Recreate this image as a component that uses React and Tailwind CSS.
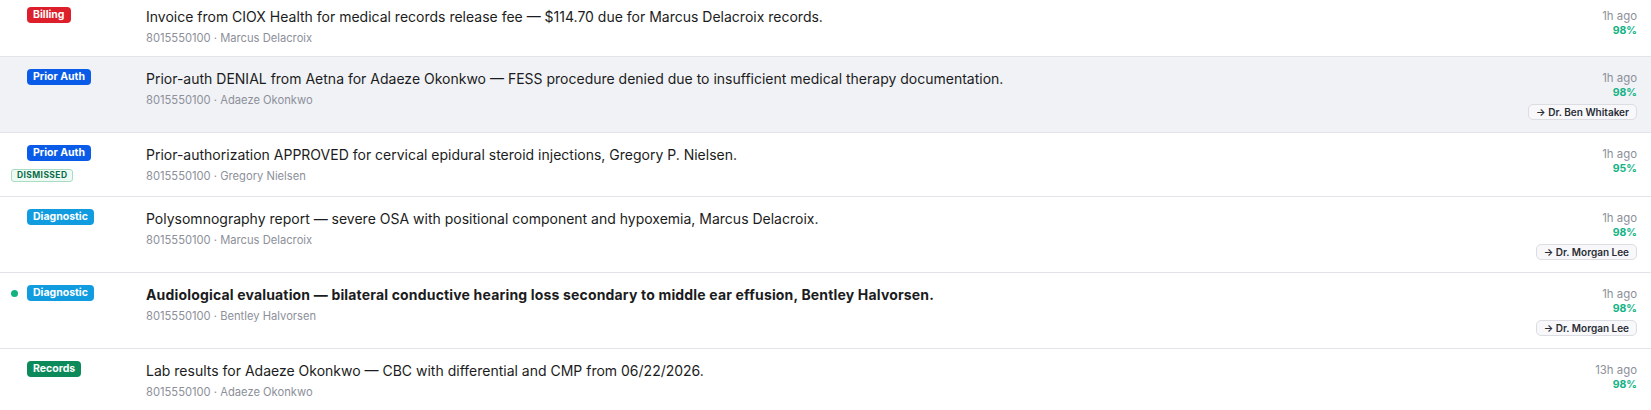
import React from "react";

const BADGE = {
  Billing: "bg-[#dc1f2a]",
  "Prior Auth": "bg-[#0a5ce8]",
  Diagnostic: "bg-[#119ce0]",
  Records: "bg-[#0d8a5a]",
};

const rows = [
  { tag: "Billing", title: "Invoice from CIOX Health for medical records release fee — $114.70 due for Marcus Delacroix records.", name: "Marcus Delacroix", time: "1h ago", pct: "98%", pb: "pb-[11px]" },
  { tag: "Prior Auth", title: "Prior-auth DENIAL from Aetna for Adaeze Okonkwo — FESS procedure denied due to insufficient medical therapy documentation.", name: "Adaeze Okonkwo", time: "1h ago", pct: "98%", to: "Dr. Ben Whitaker", active: true, pb: "pb-3" },
  { tag: "Prior Auth", title: "Prior-authorization APPROVED for cervical epidural steroid injections, Gregory P. Nielsen.", name: "Gregory Nielsen", time: "1h ago", pct: "95%", dismissed: true, pb: "pb-[13px]" },
  { tag: "Diagnostic", title: "Polysomnography report — severe OSA with positional component and hypoxemia, Marcus Delacroix.", name: "Marcus Delacroix", time: "1h ago", pct: "98%", to: "Dr. Morgan Lee", pb: "pb-3" },
  { tag: "Diagnostic", title: "Audiological evaluation — bilateral conductive hearing loss secondary to middle ear effusion, Bentley Halvorsen.", name: "Bentley Halvorsen", time: "1h ago", pct: "98%", to: "Dr. Morgan Lee", unread: true, pb: "pb-3" },
  { tag: "Records", title: "Lab results for Adaeze Okonkwo — CBC with differential and CMP from 06/22/2026.", name: "Adaeze Okonkwo", time: "13h ago", pct: "98%", pb: "pb-3" },
];

function Row({ r }) {
  return (
    <div className={`flex border-b border-[#e3e4ea] pl-[11px] pr-[14px] pt-3 ${r.pb} ${r.active ? "bg-[#f1f2f6]" : "bg-white"}`}>
      <div className="w-[135px] shrink-0 flex flex-col items-start">
        <div className="flex items-center gap-2 h-4">
          <span className="w-2 h-4 flex items-center">
            {r.unread && <span className="block w-[7px] h-[7px] rounded-full bg-[#10b27f]" />}
          </span>
          <span className={`${BADGE[r.tag]} text-white text-[10.5px] font-bold leading-4 h-4 px-[6px] rounded-[4px]`}>{r.tag}</span>
        </div>
        {r.dismissed && (
          <span className="mt-2 h-[13px] leading-[11px] px-[5px] rounded-[3px] border border-[#a8dcc3] bg-[#eefbf4] text-[#0b6b48] text-[8.5px] font-bold tracking-[0.4px]">DISMISSED</span>
        )}
      </div>
      <div className="flex-1 min-w-0">
        <div className={`text-[14px] leading-5 text-[#1b1c21] ${r.unread ? "font-bold tracking-[0.17px]" : ""}`}>{r.title}</div>
        <div className="mt-1 text-[11.2px] leading-[14px] text-[#8d909a]">8015550100 · {r.name}</div>
      </div>
      <div className="flex flex-col items-end text-right shrink-0">
        <div className="mt-px text-[11.4px] leading-4 text-[#8d909a]">{r.time}</div>
        <div className="text-[10.5px] leading-[14px] font-bold text-[#12b385]">{r.pct}</div>
        {r.to && (
          <div className="mt-1 h-4 flex items-center px-[7px] rounded-[5px] border border-[#dcdde3] bg-[#f8f8fa] text-[10px] font-semibold text-[#2a2d35]">→ {r.to}</div>
        )}
      </div>
    </div>
  );
}

export default function App() {
  return (
    <div className="w-[1651px] h-[410px] overflow-hidden bg-white" style={{ fontFamily: "Inter, 'Noto Sans', sans-serif" }}>
      <div className="-mt-[5px]">
        {rows.map((r, i) => (
          <Row key={i} r={r} />
        ))}
      </div>
    </div>
  );
}
